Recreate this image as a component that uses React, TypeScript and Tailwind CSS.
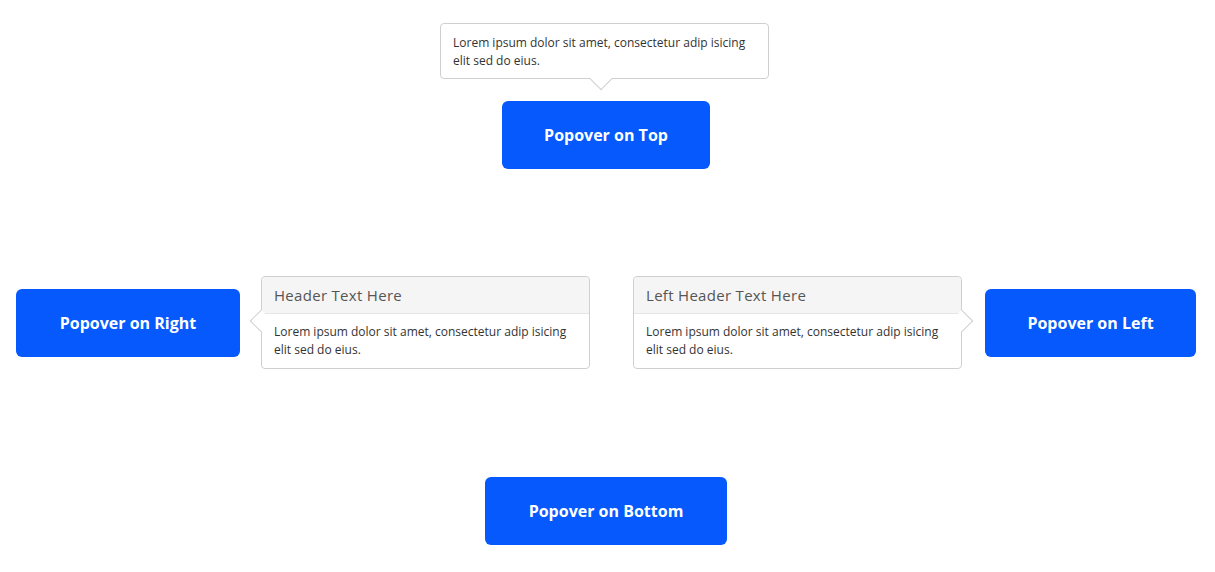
import React from 'react';

type Side = 'top' | 'right' | 'left';

const LOREM = 'Lorem ipsum dolor sit amet, consectetur adip isicing elit sed do eius.';

const Arrow: React.FC<{ side: Side }> = ({ side }) => {
  if (side === 'top') {
    return (
      <span className="absolute -bottom-[9px] left-[152px] z-10 h-[16px] w-[16px] rotate-45 border-r border-b border-[#cfcfcf] bg-white" />
    );
  }
  if (side === 'right') {
    return (
      <span className="absolute top-[36px] -left-[9px] z-10 h-[16px] w-[16px] rotate-45 border-b border-l border-[#cfcfcf] bg-white" />
    );
  }
  return (
    <span className="absolute top-[36px] -right-[9px] z-10 h-[16px] w-[16px] rotate-45 border-t border-r border-[#cfcfcf] bg-white" />
  );
};

const Popover: React.FC<{ side: Side; title?: string }> = ({ side, title }) => (
  <div className="relative w-[329px] shrink-0 rounded-[4px] border border-[#cfcfcf] bg-white">
    {title && (
      <div className="h-[37px] rounded-t-[4px] border-b border-[#e6e6e6] bg-[#f5f5f5] px-[12px] text-[15px] leading-[37px] tracking-[0.3px] text-[#555]">
        {title}
      </div>
    )}
    <p
      className={`px-[12px] text-[12px] leading-[18px] text-[#333] ${
        title ? 'py-[9px]' : 'pt-[10px] pb-[8px]'
      }`}
    >
      {LOREM}
    </p>
    <Arrow side={side} />
  </div>
);

const Button: React.FC<{ label: string; width: string }> = ({ label, width }) => (
  <button className={`${width} h-[68px] shrink-0 rounded-[6px] bg-[#0559fd] text-[16px] font-bold text-white`}>
    {label}
  </button>
);

export default function App() {
  return (
    <div className="h-[572px] w-full bg-white font-['Open_Sans',sans-serif]">
      <div className="flex flex-col items-center pt-[23px]">
        <div className="mr-[6px]">
          <Popover side="top" />
        </div>
        <div className="mt-[22px] mr-[3px]">
          <Button label="Popover on Top" width="w-[208px]" />
        </div>
      </div>

      <div className="mt-[107px] flex items-center pl-[16px]">
        <Button label="Popover on Right" width="w-[224px]" />
        <div className="ml-[21px]">
          <Popover side="right" title="Header Text Here" />
        </div>
        <div className="ml-[43px]">
          <Popover side="left" title="Left Header Text Here" />
        </div>
        <div className="ml-[23px]">
          <Button label="Popover on Left" width="w-[211px]" />
        </div>
      </div>

      <div className="mt-[108px] flex justify-center">
        <div className="mr-[3px]">
          <Button label="Popover on Bottom" width="w-[242px]" />
        </div>
      </div>
    </div>
  );
}
